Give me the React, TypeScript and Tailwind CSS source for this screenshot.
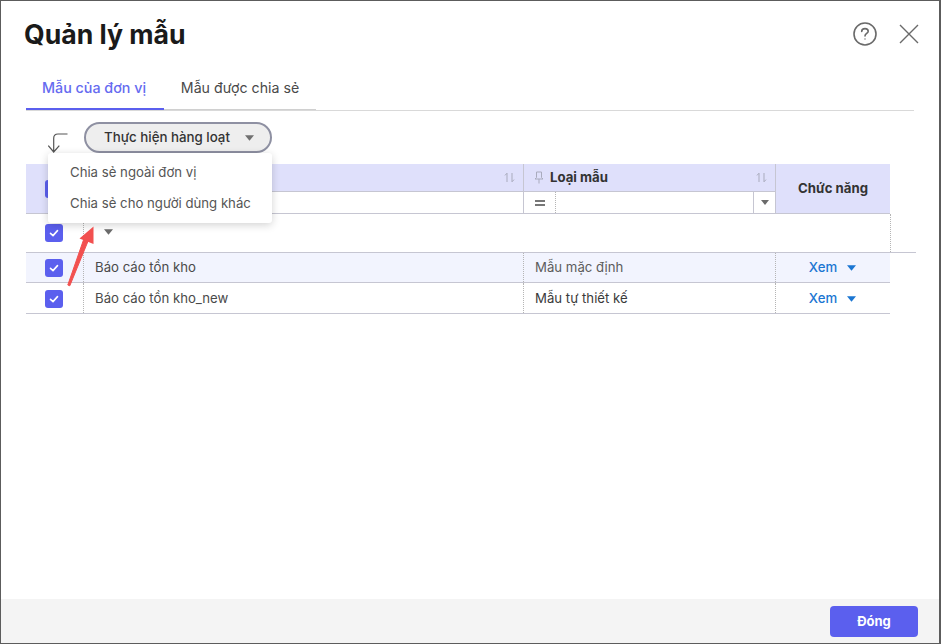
import React from "react";

const Check = () => (
  <span className="flex h-[18px] w-[18px] items-center justify-center rounded-[3px] bg-[#5b5fee]">
    <svg width="12" height="12" viewBox="0 0 12 12" fill="none" stroke="white" strokeWidth="1.6" strokeLinecap="round" strokeLinejoin="round">
      <path d="M2.5 6.3 L5 8.6 L9.5 3.6" />
    </svg>
  </span>
);

const Caret = ({ color = "#6b6b6b", w = 8, h = 5 }: { color?: string; w?: number; h?: number }) => (
  <svg width={w} height={h} viewBox="0 0 8 5"><path d="M0 0H8L4 5Z" fill={color} /></svg>
);

const Sort = () => (
  <svg width="11" height="11" viewBox="0 0 11 11" fill="none" stroke="#a9abbd" strokeWidth="1">
    <path d="M3 10V1.2M3 1.2L1 3.4M8 1V9.8M8 9.8L10 7.6" />
  </svg>
);

const Pin = () => (
  <svg width="10" height="13" viewBox="0 0 10 13" fill="none" stroke="#a9abbd" strokeWidth="1">
    <path d="M2.5 1H7.5V6.5L9 8H1L2.5 6.5ZM5 8V12.5" />
  </svg>
);

const Row = ({ name, type, tint, typeColor, tall }: { name: string; type: string; tint?: boolean; typeColor: string; tall?: boolean }) => (
  <div className={`flex w-[864px] items-stretch border-b border-[#c6c6d2] text-[13.2px] ${tall ? "h-[31px]" : "h-[30px]"} ${tint ? "bg-[#f2f4fe]" : "bg-white"}`}>
    <div className={`flex w-[57px] items-center pl-[19px] ${tall ? "pt-px" : ""}`}><Check /></div>
    <div className={`flex w-[440px] items-center border-l border-dotted border-[#b5b5b5] pl-[11px] text-[#4a4a4a] ${tall ? "pt-px" : ""}`}>{name}</div>
    <div className={`flex w-[252px] items-center border-l border-dotted border-[#b5b5b5] pl-[11px] ${tall ? "pt-px" : ""} ${typeColor}`}>{type}</div>
    <div className={`flex w-[115px] items-center justify-center gap-[10px] border-l border-dotted border-[#b5b5b5] pr-px font-medium text-[#1b76d2] ${tall ? "pt-px" : ""}`}>
      <span>Xem</span>
      <Caret color="#1b76d2" w={9} h={6} />
    </div>
  </div>
);

export default function App() {
  return (
    <div className="relative flex h-[644px] w-[941px] flex-col overflow-hidden border border-r-2 border-[#5c5c5c] bg-white font-['Inter',sans-serif]">
      <header className="flex h-[66px] shrink-0 items-start justify-between pl-[23px] pr-[20px] pt-[15px]">
        <h1 className="text-[26.6px] font-bold leading-[36px] text-[#1a1a1a]">Quản lý mẫu</h1>
        <div className="flex items-center gap-[22px] pt-[6px]">
          <svg width="24" height="24" viewBox="0 0 24 24" fill="none" stroke="#6a6a6a" strokeWidth="1.6">
            <circle cx="12" cy="12" r="11" />
            <path d="M8.7 9.4C8.7 7.6 10.2 6.6 12 6.6C13.8 6.6 15.2 7.7 15.2 9.3C15.2 11.4 12 11.6 12 14" strokeLinecap="round" />
            <circle cx="12" cy="17" r="0.7" fill="#6a6a6a" stroke="none" />
          </svg>
          <svg width="20" height="20" viewBox="0 0 20 20" fill="none" stroke="#6a6a6a" strokeWidth="1.4">
            <path d="M1 1L19 19M19 1L1 19" />
          </svg>
        </div>
      </header>

      <nav className="ml-[25px] flex h-[44px] w-[888px] shrink-0 items-stretch border-b border-[#d9d9d9]">
        <div className="flex h-[43px] items-stretch border-b border-[#d0d0d0]">
          <button className="-mb-px w-[138px] border-b-2 border-[#5b5fee] pr-[2px] text-[14.3px] font-medium text-[#666bf0]">Mẫu của đơn vị</button>
          <button className="w-[152px] text-[14.2px] text-[#4a4a4a]">Mẫu được chia sẻ</button>
        </div>
      </nav>

      <div className="flex h-[53px] shrink-0 items-start pl-[47px] pt-[11px]">
        <svg className="mt-[11px]" width="20" height="20" viewBox="0 0 20 20" fill="none" stroke="#555" strokeWidth="1.2">
          <path d="M19.5 1H10C7.5 1 5.7 2.8 5.7 5.3V19M0.3 12.6L5.7 19L11.3 12.6" />
        </svg>
        <button className="ml-[16px] flex h-[31px] w-[188px] items-center rounded-full border-2 border-[#8e90a2] bg-[#eeeeee] pl-[18px] text-[13.3px] font-medium text-[#333]">
          <span>Thực hiện hàng loạt</span>
          <span className="ml-[15px]"><Caret color="#707070" w={9} h={6} /></span>
        </button>
      </div>

      <section className="ml-[25px] w-[890px]">
        <div className="flex h-[50px] w-[864px] items-stretch border-b border-[#c6c6d2] bg-[#dfe0fb] text-[13.2px]">
          <div className="flex w-[57px] items-center pl-[19px]"><span className="h-[18px] w-[18px] rounded-[3px] bg-[#5b5fee]" /></div>
          <div className="flex w-[440px] flex-col border-l border-[#c6c6d2]">
            <div className="flex h-[28px] items-center justify-end border-b border-[#c6c6d2] pr-[8px]"><Sort /></div>
            <div className="flex-1 bg-white" />
          </div>
          <div className="flex w-[252px] flex-col border-l border-[#c6c6d2]">
            <div className="flex h-[28px] items-center border-b border-[#c6c6d2] pl-[10px] pr-[8px]">
              <Pin />
              <span className="ml-[6px] flex-1 font-bold text-[#333]">Loại mẫu</span>
              <Sort />
            </div>
            <div className="flex flex-1 items-stretch bg-white">
              <div className="flex w-[32px] items-center justify-center border-r border-dotted border-[#b5b5b5]">
                <span className="flex flex-col gap-[2px]"><span className="h-[2px] w-[10px] bg-[#777]" /><span className="h-[2px] w-[10px] bg-[#777]" /></span>
              </div>
              <div className="flex-1" />
              <div className="flex w-[22px] items-center justify-center border-l border-[#c6c6d2]"><Caret w={8} h={5} /></div>
            </div>
          </div>
          <div className="flex w-[115px] items-center justify-center border-l border-[#c6c6d2] font-bold text-[#333]">Chức năng</div>
        </div>

        <div className="flex h-[38px] w-[865px] items-stretch border-r border-dotted border-[#b5b5b5]">
          <div className="flex w-[57px] items-center pl-[19px]"><Check /></div>
          <div className="flex flex-1 items-center border-l border-dotted border-[#b5b5b5] pb-[2px] pl-[20px]"><Caret w={9} h={6} /></div>
        </div>

        <div className="h-px w-[890px] bg-[#c6c6d2]" />
        <Row name="Báo cáo tồn kho" type="Mẫu mặc định" tint typeColor="text-[#5c5c5c]" />
        <Row name="Báo cáo tồn kho_new" type="Mẫu tự thiết kế" typeColor="text-[#3a3a3a]" tall />
      </section>

      <div className="flex-1" />

      <footer className="flex h-[44px] shrink-0 items-start justify-end bg-[#f4f4f4] pr-[21px] pt-[7px]">
        <button className="h-[31px] w-[88px] rounded-[4px] bg-[#5b5fee] text-[13px] font-bold text-white">Đóng</button>
      </footer>

      <div className="absolute left-[47px] top-[152px] flex h-[70px] w-[224px] flex-col justify-center gap-[11px] rounded-[3px] bg-white pl-[22px] text-[13.2px] text-[#555] shadow-[0_2px_8px_rgba(0,0,0,0.18)]">
        <div>Chia sẻ ngoài đơn vị</div>
        <div>Chia sẻ cho người dùng khác</div>
      </div>

      <svg className="absolute left-[62px] top-[224px]" width="34" height="64" viewBox="0 0 34 64" fill="none">
        <path d="M4.8 60L6.8 60.8L25.5 15L21 13.5Z" fill="#f2504f" stroke="#f2504f" strokeWidth="1" strokeLinejoin="round" />
        <path d="M30.5 1.5L16.5 13.5L30.5 19Z" fill="#f2504f" />
      </svg>
    </div>
  );
}
